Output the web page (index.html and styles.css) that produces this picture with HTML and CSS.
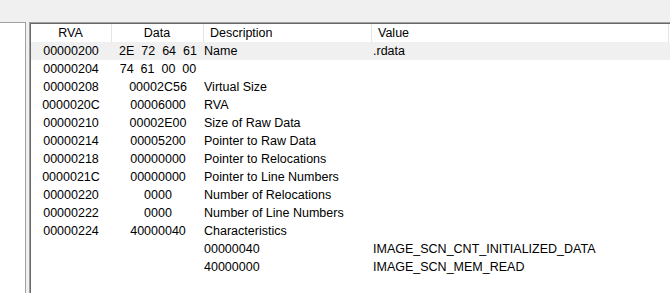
FILE: index.html
```html
<!DOCTYPE html>
<html>
<head>
<meta charset="utf-8">
<link rel="stylesheet" href="styles.css">
</head>
<body>
<div class="frame">
  <div class="tree"></div>
  <div class="list-outer">
    <div class="list">
      <div class="row head">
        <div class="c rva">RVA</div>
        <div class="c data">Data</div>
        <div class="c desc">Description</div>
        <div class="c val">Value</div>
      </div>
      <div class="row sel"><div class="c rva">00000200</div><div class="c data">2E  72  64  61</div><div class="c desc">Name</div><div class="c val">.rdata</div></div>
      <div class="row"><div class="c rva">00000204</div><div class="c data">74  61  00  00</div><div class="c desc"></div><div class="c val"></div></div>
      <div class="row"><div class="c rva">00000208</div><div class="c data">00002C56</div><div class="c desc">Virtual Size</div><div class="c val"></div></div>
      <div class="row"><div class="c rva">0000020C</div><div class="c data">00006000</div><div class="c desc">RVA</div><div class="c val"></div></div>
      <div class="row"><div class="c rva">00000210</div><div class="c data">00002E00</div><div class="c desc">Size of Raw Data</div><div class="c val"></div></div>
      <div class="row"><div class="c rva">00000214</div><div class="c data">00005200</div><div class="c desc">Pointer to Raw Data</div><div class="c val"></div></div>
      <div class="row"><div class="c rva">00000218</div><div class="c data">00000000</div><div class="c desc">Pointer to Relocations</div><div class="c val"></div></div>
      <div class="row"><div class="c rva">0000021C</div><div class="c data">00000000</div><div class="c desc">Pointer to Line Numbers</div><div class="c val"></div></div>
      <div class="row"><div class="c rva">00000220</div><div class="c data">0000</div><div class="c desc">Number of Relocations</div><div class="c val"></div></div>
      <div class="row"><div class="c rva">00000222</div><div class="c data">0000</div><div class="c desc">Number of Line Numbers</div><div class="c val"></div></div>
      <div class="row"><div class="c rva">00000224</div><div class="c data">40000040</div><div class="c desc">Characteristics</div><div class="c val"></div></div>
      <div class="row"><div class="c rva"></div><div class="c data"></div><div class="c desc">00000040</div><div class="c val">IMAGE_SCN_CNT_INITIALIZED_DATA</div></div>
      <div class="row"><div class="c rva"></div><div class="c data"></div><div class="c desc">40000000</div><div class="c val">IMAGE_SCN_MEM_READ</div></div>
    </div>
  </div>
</div>
</body>
</html>
```

FILE: styles.css
```css
html, body {
  margin: 0;
  padding: 0;
  height: 100%;
  overflow: hidden;
}
body {
  background: #f0f0f0;
  font-family: "Liberation Sans", Arial, sans-serif;
  font-size: 12.5px;
  color: #000;
}
.frame {
  display: flex;
  gap: 3px;
  padding-top: 22px;
  height: 100%;
  box-sizing: border-box;
}
.tree {
  width: 25px;
  background: #fff;
  border-top: 1px solid #a0a0a0;
  border-right: 1px solid #a0a0a0;
}
.list-outer {
  flex: 1;
  border-top: 1px solid #a0a0a0;
  border-left: 1px solid #a0a0a0;
}
.list {
  height: 100%;
  background: #fff;
  border-top: 1px solid #696969;
  border-left: 1px solid #696969;
  box-sizing: border-box;
}
.row {
  display: grid;
  grid-template-columns: 81px 92px 168px 297px 1fr;
  height: 18px;
  line-height: 18px;
  white-space: pre;
}
.row.sel {
  background: #f0f0f0;
}
.c {
  overflow: hidden;
}
.rva, .data {
  text-align: center;
}
.row:not(.head) .rva {
  padding-right: 1px;
}
.desc {
  padding-left: 0;
}
.val {
  padding-left: 1px;
}
.head {
  background: #fff;
}
.head .c {
  border-right: 1px solid #e5e5e5;
}
.head .desc {
  padding-left: 6px;
}
.head .val {
  padding-left: 6px;
}
.head .rva, .head .data {
  padding-right: 1px;
}
```
